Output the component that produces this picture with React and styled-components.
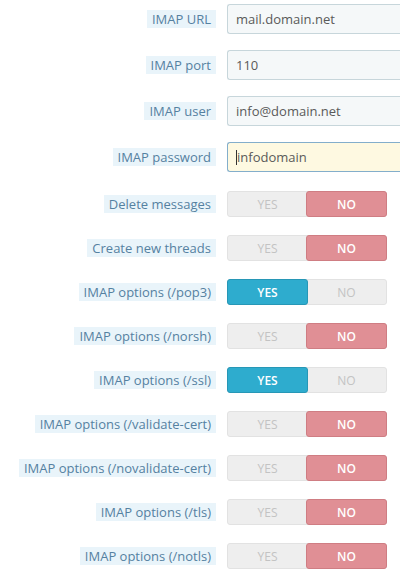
import React from "react";
import styled, { createGlobalStyle } from "styled-components";

const Global = createGlobalStyle`
  html, body { margin: 0; padding: 0; background: #fff; overflow: hidden; }
  body { font-family: "Open Sans", "Liberation Sans", sans-serif; }
`;

const Form = styled.div`
  display: flex;
  flex-direction: column;
  padding-top: 4px;
  width: 400px;
  overflow: hidden;
`;

const Row = styled.div`
  display: grid;
  grid-template-columns: 216px 1fr;
  column-gap: 11px;
  align-items: center;
  height: ${(p) => (p.$toggle ? "26px" : "30px")};
  margin-bottom: ${(p) => p.$gap}px;
`;

const LabelCell = styled.div`
  display: flex;
  justify-content: flex-end;
`;

const Label = styled.span`
  background: #e9f4fa;
  color: #5581a1;
  font-size: 13px;
  line-height: 18px;
  padding: 0 5px;
  white-space: nowrap;
`;

const Input = styled.div`
  box-sizing: border-box;
  height: 30px;
  width: 190px;
  border: 1px solid ${(p) => (p.$focus ? "#83aecb" : "#c7d6db")};
  border-right: none;
  border-radius: 3px 0 0 3px;
  background: ${(p) => (p.$focus ? "#fef9e1" : "#f5f8f9")};
  color: #5a5a5a;
  font-size: 13px;
  padding: 0 8px;
  display: flex;
  align-items: center;
`;

const Caret = styled.span`
  display: inline-block;
  width: 1px;
  height: 15px;
  background: #333;
`;

const Switch = styled.div`
  display: grid;
  grid-template-columns: 1fr 1fr;
  width: 160px;
  height: 26px;
  box-sizing: border-box;
  border-radius: 3px;
  background: #eeeeee;
  border: 1px solid #e2e2e2;
`;

const Half = styled.div`
  display: flex;
  align-items: center;
  justify-content: center;
  font-size: 12px;
  text-transform: uppercase;
  margin: -1px;
  border-radius: 3px;
  ${(p) =>
    p.$on
      ? p.$kind === "yes"
        ? "background:#2eacce;border:1px solid #2797b6;color:#fff;font-weight:600;"
        : "background:#e08f95;border:1px solid #cf7d83;color:#fff;font-weight:600;"
      : "color:#c3c3c3;border:1px solid transparent;"}
`;

const inputs = [
  { label: "IMAP URL", value: "mail.domain.net" },
  { label: "IMAP port", value: "110" },
  { label: "IMAP user", value: "info@domain.net" },
  { label: "IMAP password", value: "infodomain", focus: true },
];

const toggles = [
  ["Delete messages", false],
  ["Create new threads", false],
  ["IMAP options (/pop3)", true],
  ["IMAP options (/norsh)", false],
  ["IMAP options (/ssl)", true],
  ["IMAP options (/validate-cert)", false],
  ["IMAP options (/novalidate-cert)", false],
  ["IMAP options (/tls)", false],
  ["IMAP options (/notls)", false],
];

export default function App() {
  return (
    <>
      <Global />
      <Form>
        {inputs.map((f, i) => (
          <Row key={f.label} $gap={i === inputs.length - 1 ? 19 : 16}>
            <LabelCell>
              <Label>{f.label}</Label>
            </LabelCell>
            <Input $focus={f.focus}>
              {f.focus && <Caret />}
              {f.value}
            </Input>
          </Row>
        ))}
        {toggles.map(([label, yes]) => (
          <Row key={label} $toggle $gap={18}>
            <LabelCell>
              <Label>{label}</Label>
            </LabelCell>
            <Switch>
              <Half $kind="yes" $on={yes}>Yes</Half>
              <Half $kind="no" $on={!yes}>No</Half>
            </Switch>
          </Row>
        ))}
      </Form>
    </>
  );
}
